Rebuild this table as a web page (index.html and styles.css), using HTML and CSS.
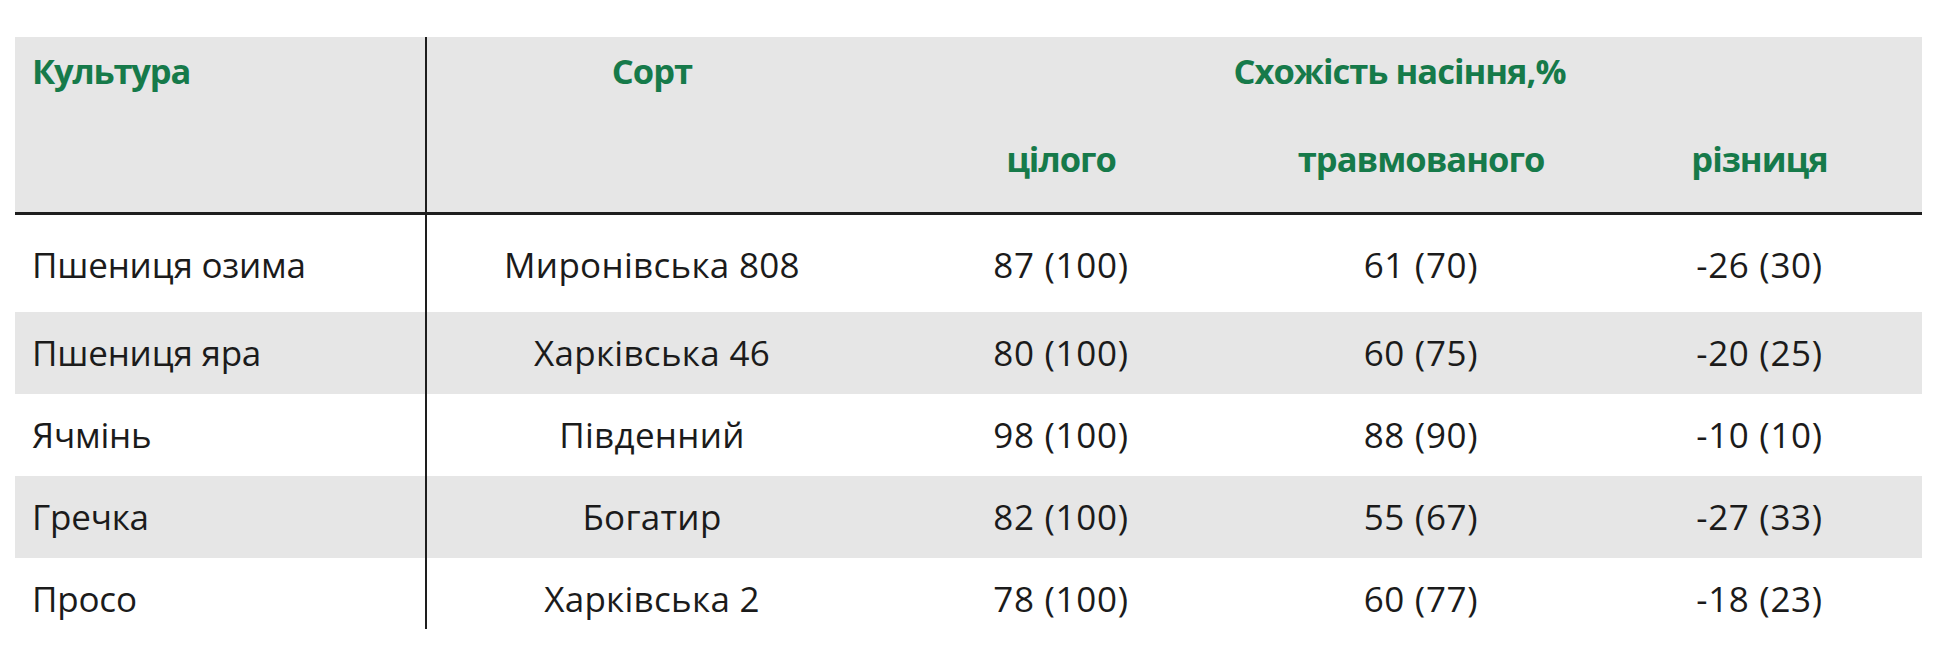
FILE: index.html
```html
<!DOCTYPE html>
<html lang="uk">
<head>
<meta charset="utf-8">
<title>Схожість насіння</title>
<link rel="stylesheet" href="styles.css">
</head>
<body>
<table class="seed-table">
  <colgroup>
    <col class="w1"><col class="w2"><col class="w3"><col class="w4"><col class="w5">
  </colgroup>
  <thead>
    <tr class="hrow1">
      <th class="first left" rowspan="2">Культура</th>
      <th class="span" rowspan="2">Сорт</th>
      <th class="group" colspan="3">Схожість насіння,%</th>
    </tr>
    <tr class="hrow2">
      <th class="sub">цілого</th>
      <th class="sub">травмованого</th>
      <th class="sub">різниця</th>
    </tr>
  </thead>
  <tbody>
    <tr class="r-first">
      <td class="first left">Пшениця озима</td><td>Миронівська 808</td><td class="num">87 (100)</td><td class="num">61 (70)</td><td class="num">-26 (30)</td>
    </tr>
    <tr class="alt">
      <td class="first left">Пшениця яра</td><td>Харківська 46</td><td class="num">80 (100)</td><td class="num">60 (75)</td><td class="num">-20 (25)</td>
    </tr>
    <tr>
      <td class="first left">Ячмінь</td><td>Південний</td><td class="num">98 (100)</td><td class="num">88 (90)</td><td class="num">-10 (10)</td>
    </tr>
    <tr class="alt">
      <td class="first left">Гречка</td><td>Богатир</td><td class="num">82 (100)</td><td class="num">55 (67)</td><td class="num">-27 (33)</td>
    </tr>
    <tr class="r-last">
      <td class="first left">Просо</td><td>Харківська 2</td><td class="num">78 (100)</td><td class="num">60 (77)</td><td class="num">-18 (23)</td>
    </tr>
  </tbody>
</table>
</body>
</html>
```

FILE: styles.css
```css
html, body {
  margin: 0;
  padding: 0;
  background: #ffffff;
}

body {
  font-family: "Open Sans", "Noto Sans", sans-serif;
  color: #1b1b1b;
}

.seed-table {
  border-collapse: separate;
  border-spacing: 0;
  table-layout: fixed;
  width: 1907px;
  margin: 37px 0 0 15px;
}

.w1 { width: 412px; }
.w2 { width: 450px; }
.w3 { width: 368px; }
.w4 { width: 352px; }
.w5 { width: 325px; }

.seed-table th {
  background: #e6e6e6;
  color: #167a4a;
  font-family: "Open Sans", "Noto Sans", sans-serif;
  font-weight: 700;
  font-size: 34.5px;
  letter-spacing: -1px;
  line-height: 40px;
  text-align: center;
  padding: 0;
  vertical-align: top;
}

.seed-table .hrow1 th {
  padding-top: 14px;
  height: 64px;
}

.seed-table .hrow1 th.first,
.seed-table .hrow1 th.span {
  border-bottom: 3px solid #1e1e1e;
}

.seed-table .hrow2 th {
  padding-top: 24px;
  padding-bottom: 33px;
  border-bottom: 3px solid #1e1e1e;
}

.seed-table th.first {
  letter-spacing: -1.2px;
}

.seed-table td {
  font-size: 35px;
  letter-spacing: 0.3px;
  line-height: 40px;
  text-align: center;
  padding: 21px 0;
  vertical-align: top;
}

.seed-table td.first {
  letter-spacing: -0.2px;
}

.seed-table td.num {
  letter-spacing: 0.7px;
}

.seed-table .r-first td {
  padding-top: 30px;
  padding-bottom: 27px;
}

.seed-table .r-last td {
  padding-bottom: 10px;
}

.seed-table tr.alt td {
  background: #e6e6e6;
}

.seed-table .first {
  border-right: 2px solid #1e1e1e;
}

.seed-table .left {
  text-align: left;
  padding-left: 17px;
}
```
